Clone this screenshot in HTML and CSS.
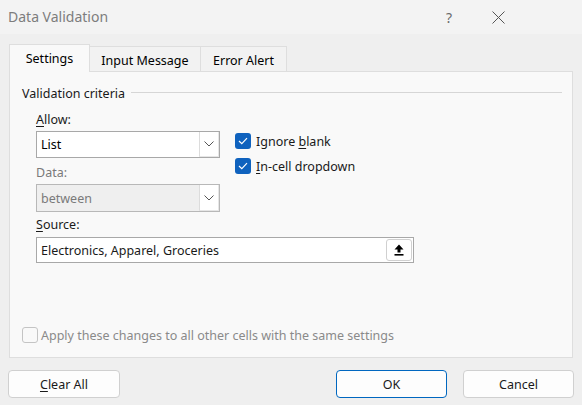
FILE: index.html
```html
<!DOCTYPE html>
<html>
<head>
<meta charset="utf-8">
<link rel="stylesheet" href="styles.css">
</head>
<body>
<div class="window">
  <div class="titlebar">
    <span class="title">Data Validation</span>
    <span class="help">?</span>
    <span class="close">
      <svg width="13" height="13" viewBox="0 0 13 13"><path d="M0.5 0.5 L12.5 12.5 M12.5 0.5 L0.5 12.5" stroke="#555" stroke-width="1" fill="none"/></svg>
    </span>
  </div>
  <div class="content">
    <div class="tabs">
      <div class="tab active">Settings</div>
      <div class="tab">Input Message</div>
      <div class="tab">Error Alert</div>
    </div>
    <div class="panel">
      <div class="group-title"><span>Validation criteria</span><span class="rule"></span></div>
      <div class="criteria">
        <div class="col-left">
          <div class="label"><u>A</u>llow:</div>
          <div class="select">
            <span class="value">List</span>
            <span class="drop"><svg width="10" height="6" viewBox="0 0 10 6"><path d="M0.5 0.5 L5 5 L9.5 0.5" stroke="#555" stroke-width="1" fill="none"/></svg></span>
          </div>
          <div class="label label-gap disabled">Data:</div>
          <div class="select is-disabled">
            <span class="value">between</span>
            <span class="drop"><svg width="10" height="6" viewBox="0 0 10 6"><path d="M0.5 0.5 L5 5 L9.5 0.5" stroke="#555" stroke-width="1" fill="none"/></svg></span>
          </div>
        </div>
        <div class="checks">
          <div class="check-row"><span class="cb on"><svg width="10" height="8" viewBox="0 0 10 8"><path d="M1 4 L3.8 6.6 L9 1.2" stroke="#fff" stroke-width="1.2" fill="none"/></svg></span><span>Ignore <u>b</u>lank</span></div>
          <div class="check-row"><span class="cb on"><svg width="10" height="8" viewBox="0 0 10 8"><path d="M1 4 L3.8 6.6 L9 1.2" stroke="#fff" stroke-width="1.2" fill="none"/></svg></span><span><u>I</u>n-cell dropdown</span></div>
        </div>
      </div>
      <div class="label source-label"><u>S</u>ource:</div>
      <div class="source">
        <span class="value">Electronics, Apparel, Groceries</span>
        <span class="pick"><svg width="10" height="12" viewBox="0 0 10 12"><path d="M5 0.5 L9.5 5.5 L6.5 5.5 L6.5 8.5 L3.5 8.5 L3.5 5.5 L0.5 5.5 Z" fill="#000"/><rect x="0.5" y="10" width="9" height="1.6" fill="#000"/></svg></span>
      </div>
      <div class="apply"><span class="cb off"></span><span>Apply these changes to all other cells with the same settings</span></div>
    </div>
    <div class="footer">
      <div class="btn"><u>C</u>lear All</div>
      <div class="btn-spacer"></div>
      <div class="btn primary">OK</div>
      <div class="btn">Cancel</div>
    </div>
  </div>
</div>
</body>
</html>
```
FILE: styles.css
```css
* { box-sizing: border-box; }
html, body { margin: 0; padding: 0; }
body {
  font-family: "Noto Sans", "Open Sans", sans-serif;
  font-size: 12.5px;
  color: #000;
  background: #efefef;
}
u { text-decoration: underline; text-underline-offset: 2px; }
.window {
  width: 582px;
  height: 405px;
  background: #efefef;
  overflow: hidden;
}
.titlebar {
  height: 34px;
  background: #f3f3f3;
  display: flex;
  align-items: center;
  padding-left: 8px;
}
.title {
  font-size: 14px;
  color: #7d7d7d;
  flex: 1;
  margin-top: -1px;
}
.help {
  font-size: 14px;
  color: #6a6a6a;
  width: 20px;
  text-align: center;
  margin-right: 33px;
}
.close {
  width: 13px;
  height: 13px;
  display: flex;
  margin-right: 77px;
}
.content {
  padding: 10px 8px 0 8px;
}
.tabs {
  display: flex;
  align-items: flex-end;
  height: 28px;
  margin-left: 1px;
  margin-bottom: -1px;
  position: relative;
  z-index: 1;
}
.tab {
  height: 25px;
  padding: 0;
  display: flex;
  align-items: center;
  justify-content: center;
  background: #f2f2f2;
  border: 1px solid #dedede;
  border-bottom: none;
  margin-bottom: 1px;
  padding-top: 2px;
}
.tab + .tab { border-left: none; }
.tab.active {
  height: 28px;
  background: #f9f9f9;
  margin-bottom: 0;
  width: 81px;
  padding-top: 1px;
  padding-bottom: 2px;
}
.tab:nth-child(2) { width: 111px; }
.tab:nth-child(3) { width: 86px; }
.panel {
  margin: 0 1px;
  height: 287px;
  background: #f9f9f9;
  border: 1px solid #dedede;
  padding: 13px 10px 14px 12px;
  display: flex;
  flex-direction: column;
}
.group-title {
  display: flex;
  align-items: center;
  height: 16px;
  color: #1a1a1a;
}
.rule {
  flex: 1;
  height: 1px;
  background: #d6d6d6;
  margin-left: 6px;
  margin-top: -1px;
}
.criteria {
  display: flex;
  padding-left: 14px;
  margin-top: 11px;
}
.col-left {
  width: 184px;
  display: flex;
  flex-direction: column;
}
.label {
  height: 16px;
  line-height: 16px;
  color: #1a1a1a;
}
.label.disabled { color: #7a7a7a; }
.label-gap { margin-top: 7px; }
.select {
  margin-top: 3px;
  height: 27px;
  border: 1px solid #a8a8a8;
  background: #fff;
  display: flex;
  align-items: stretch;
}
.select .value {
  flex: 1;
  display: flex;
  align-items: center;
  padding-left: 4px;
}
.select .drop {
  width: 20px;
  border-left: 1px solid #dcdcdc;
  border-right: 1px solid #e6e6e6;
  border-bottom: 1px solid #e6e6e6;
  background: #fff;
  display: flex;
  align-items: center;
  justify-content: center;
}
.select.is-disabled {
  background: #efefef;
  border-color: #b8b8b8;
  margin-top: 3px;
  height: 28px;
}
.select.is-disabled .value { color: #7a7a7a; }
.checks {
  margin-left: 15px;
  margin-top: 21px;
  display: flex;
  flex-direction: column;
  gap: 9px;
}
.check-row {
  display: flex;
  align-items: center;
  height: 16px;
  gap: 5px;
  color: #1a1a1a;
}
.cb {
  width: 16px;
  height: 16px;
  border-radius: 3px;
  display: flex;
  align-items: center;
  justify-content: center;
  flex: none;
}
.cb.on { background: #0f62be; }
.cb.off {
  border: 1px solid #c4c4c4;
  background: #f9f9f9;
}
.source-label {
  margin-left: 14px;
  margin-top: 5px;
}
.source {
  margin-left: 14px;
  margin-top: 4px;
  width: 378px;
  height: 26px;
  border: 1px solid #a8a8a8;
  background: #fff;
  display: flex;
  align-items: center;
  padding: 0 1px 0 4px;
}
.source .value { flex: 1; color: #1a1a1a; }
.pick {
  width: 26px;
  height: 22px;
  border: 1px solid #d0d0d0;
  border-radius: 3px;
  background: #fff;
  display: flex;
  align-items: center;
  justify-content: center;
}
.apply {
  margin-top: auto;
  display: flex;
  align-items: center;
  gap: 3px;
  height: 16px;
  color: #8a8a8a;
}
.footer {
  display: flex;
  margin-top: 12px;
  gap: 16px;
}
.btn {
  width: 111px;
  height: 28px;
  border: 1px solid #d0d0d0;
  border-radius: 4px;
  background: #fdfdfd;
  display: flex;
  align-items: center;
  justify-content: center;
  color: #1a1a1a;
}
.btn:first-child { width: 112px; }
.btn-spacer { flex: 1; margin-left: -16px; }
.btn.primary { border-color: #0067c0; }
```
